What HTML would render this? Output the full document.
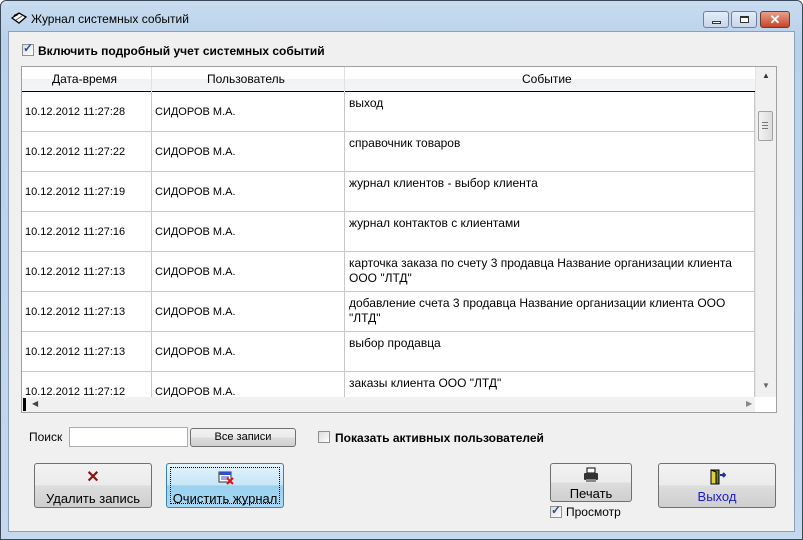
<!DOCTYPE html>
<html><head><meta charset="utf-8"><style>
*{margin:0;padding:0;box-sizing:border-box}
body{width:803px;height:540px;overflow:hidden;background:#fff;font-family:"Liberation Sans",sans-serif;position:relative}
.a{position:absolute}
#frame{left:0;top:0;width:803px;height:540px;border:1px solid #3a4a5a;border-radius:6px 6px 0 0;background:linear-gradient(#c9dcf0,#b9d1ea 40px,#c4d8ee)}
#client{left:8px;top:31px;width:787px;height:501px;background:#f0f0f0;border:1px solid #8aa0b8}
.t{font-size:12px;color:#000;white-space:nowrap}
.cell{font-size:11px}
.btn{border:1px solid #707070;border-radius:3px;background:linear-gradient(#f2f2f2 0,#ebebeb 50%,#dddddd 50%,#cfcfcf);text-align:center;font-size:12px}
.cb{width:12px;height:12px;border:1px solid #8e8f8f;background:linear-gradient(135deg,#dcdcdc,#fff)}
.hl{height:1px;background:#c8c8c8}
.vl{width:1px;background:#c8c8c8}
</style></head><body>
<div class="a" id="frame"></div>
<!-- title -->
<svg class="a" style="left:10px;top:10px" width="18" height="16" viewBox="0 0 18 16"><path d="M2 8 L9 3 L16 7 L9 13 Z" fill="#fff" stroke="#000" stroke-width="1.3"/><path d="M4 6 L8 4" stroke="#000" stroke-width="2"/><path d="M6 10 L12 6" stroke="#555" stroke-width="1"/></svg>
<div class="a t" style="left:31px;top:12px;font-size:12px">Журнал системных событий</div>
<div class="a" style="left:703px;top:11px;width:26px;height:17px;border:1px solid #6d7f99;border-radius:3px;background:linear-gradient(#e4edf8,#c6d6ea)"><div class="a" style="left:8px;top:9px;width:9px;height:3px;border:1px solid #333;background:#fff"></div></div>
<div class="a" style="left:731px;top:11px;width:26px;height:17px;border:1px solid #6d7f99;border-radius:3px;background:linear-gradient(#e4edf8,#c6d6ea)"><div class="a" style="left:8px;top:4px;width:9px;height:7px;border:1px solid #333;border-top-width:2px;background:#fff"></div></div>
<div class="a" style="left:760px;top:11px;width:30px;height:17px;border:1px solid #6d3a2e;border-radius:3px;background:linear-gradient(#e8a08c,#c7442b);color:#fff;font-weight:bold;font-size:13px;text-align:center;line-height:15px">✕</div>
<div class="a" id="client"></div>
<!-- checkbox top -->
<div class="a cb" style="left:22px;top:44px"></div><div class="a" style="left:23px;top:41px;color:#2a4fa0;font-size:12px;font-weight:bold">✓</div>
<div class="a t" style="left:38px;top:44px;font-weight:bold">Включить подробный учет системных событий</div>
<!-- grid -->
<div class="a" style="left:21px;top:66px;width:756px;height:347px;border:1px solid #a0a0a0;background:#fff;overflow:hidden">
 <div class="a" style="left:0;top:0;width:733px;height:24px;background:linear-gradient(#fff,#fff 50%,#f1f2f4 50%,#f4f5f7)"></div>
 <div class="a t" style="left:30px;top:5px">Дата-время</div>
 <div class="a t" style="left:185px;top:5px">Пользователь</div>
 <div class="a t" style="left:500px;top:5px">Событие</div>
 <div class="a" style="left:0;top:24px;width:733px;height:1px;background:#000"></div>
 <div class="a vl" style="left:129px;top:0;height:330px;background:#e0e0e0"></div>
 <div class="a vl" style="left:322px;top:0;height:330px;background:#e0e0e0"></div>
 <div class="a vl" style="left:129px;top:25px;height:305px"></div>
 <div class="a vl" style="left:322px;top:25px;height:305px"></div>
 <div class="a vl" style="left:732px;top:25px;height:305px"></div>
 <div id="rows"></div>
 <!-- vscroll -->
 <div class="a" style="left:733px;top:0;width:21px;height:330px;background:#f0f0f0;border-left:1px solid #e4e4e4"></div>
 <div class="a" style="left:740px;top:4px;font-size:8px;color:#333">▲</div>
 <div class="a" style="left:740px;top:314px;font-size:8px;color:#666">▼</div>
 <div class="a" style="left:736px;top:44px;width:15px;height:30px;border:1px solid #a0a0a0;border-radius:2px;background:linear-gradient(90deg,#f2f2f2,#dcdcdc)"></div>
 <div class="a" style="left:740px;top:55px;width:6px;height:7px;border-top:1px solid #777;border-bottom:1px solid #777"><div style="margin-top:2px;height:1px;background:#777"></div></div>
 <!-- hscroll -->
 <div class="a" style="left:0;top:330px;width:733px;height:16px;background:#f0f0f0"></div>
 <div class="a" style="left:1px;top:331px;width:3px;height:13px;background:#000"></div>
 <div class="a" style="left:10px;top:332px;font-size:8px;color:#444">◀</div>
 <div class="a" style="left:724px;top:332px;font-size:8px;color:#888">▶</div>
</div>
<!-- search -->
<div class="a t" style="left:29px;top:430px">Поиск</div>
<div class="a" style="left:69px;top:427px;width:119px;height:20px;border:1px solid #abadb3;background:#fff"></div>
<div class="a btn" style="left:190px;top:428px;width:106px;height:19px;font-size:11px;line-height:17px">Все записи</div>
<div class="a cb" style="left:318px;top:431px"></div>
<div class="a t" style="left:335px;top:431px;font-weight:bold">Показать активных пользователей</div>
<!-- buttons -->
<div class="a btn" style="left:34px;top:463px;width:118px;height:45px"><div style="color:#8b1010;font-size:16px;font-weight:bold;line-height:20px;margin-top:4px">✕</div><div style="font-size:13px;margin-top:3px">Удалить запись</div></div>
<div class="a btn" style="left:166px;top:463px;width:118px;height:45px;border-color:#3c7fb1;background:linear-gradient(#e5f4fc,#c4e5f6 50%,#98d1ef 50%,#a7d9f5)"><div class="a" style="left:3px;top:3px;right:3px;bottom:3px;border:1px dotted #000"></div>
<svg class="a" style="left:51px;top:7px" width="16" height="14"><rect x="1" y="1" width="12" height="10" fill="#fff" stroke="#334" /><rect x="1" y="1" width="12" height="3" fill="#3050c0"/><path d="M3 6h8M3 8h8" stroke="#3050c0"/><path d="M9 7l6 6M15 7l-6 6" stroke="#e01010" stroke-width="2"/></svg>
<div class="a" style="left:0;right:0;top:27px;font-size:13px">Очистить журнал</div></div>
<div class="a btn" style="left:550px;top:463px;width:82px;height:39px"><svg style="margin-top:3px" width="18" height="16"><rect x="5" y="1" width="8" height="5" fill="#fff" stroke="#000"/><rect x="2" y="6" width="14" height="7" rx="1" fill="#333"/><rect x="4" y="12" width="10" height="3" fill="#888"/></svg><div style="font-size:13px;margin-top:0px">Печать</div></div>
<div class="a cb" style="left:550px;top:506px"></div><div class="a" style="left:551px;top:503px;color:#2a4fa0;font-size:12px;font-weight:bold">✓</div>
<div class="a t" style="left:566px;top:505px">Просмотр</div>
<div class="a btn" style="left:658px;top:463px;width:118px;height:45px"><svg style="margin-top:5px" width="18" height="16"><rect x="3" y="1" width="8" height="14" fill="#6a7a20" stroke="#000"/><path d="M3 1l5 2v12l-5 0z" fill="#e0d040" stroke="#000"/><path d="M12 6h5M15 4l2 2-2 2" stroke="#2030a0" stroke-width="2" fill="none"/></svg><div style="font-size:13px;color:#1a1acc;margin-top:1px">Выход</div></div>
<script>
var d=[["11:27:28","выход"],["11:27:22","справочник товаров"],["11:27:19","журнал клиентов - выбор клиента"],["11:27:16","журнал контактов с клиентами"],["11:27:13","карточка заказа по счету 3 продавца Название организации клиента<br>ООО \"ЛТД\""],["11:27:13","добавление счета 3 продавца Название организации клиента ООО<br>\"ЛТД\""],["11:27:13","выбор продавца"],["11:27:12","заказы клиента ООО \"ЛТД\""]];
var h="";for(var i=0;i<d.length;i++){var y=25+i*40;
h+='<div class="a cell" style="left:3px;top:'+(y+14)+'px">10.12.2012 '+d[i][0]+'</div><div class="a cell" style="left:133px;top:'+(y+14)+'px">СИДОРОВ М.А.</div><div class="a t" style="left:327px;top:'+(y+4)+'px;line-height:15px">'+d[i][1]+'</div>';
if(i<7)h+='<div class="a hl" style="left:0;top:'+(y+39)+'px;width:733px"></div>';}
document.getElementById("rows").innerHTML=h;
</script>
</body></html>
